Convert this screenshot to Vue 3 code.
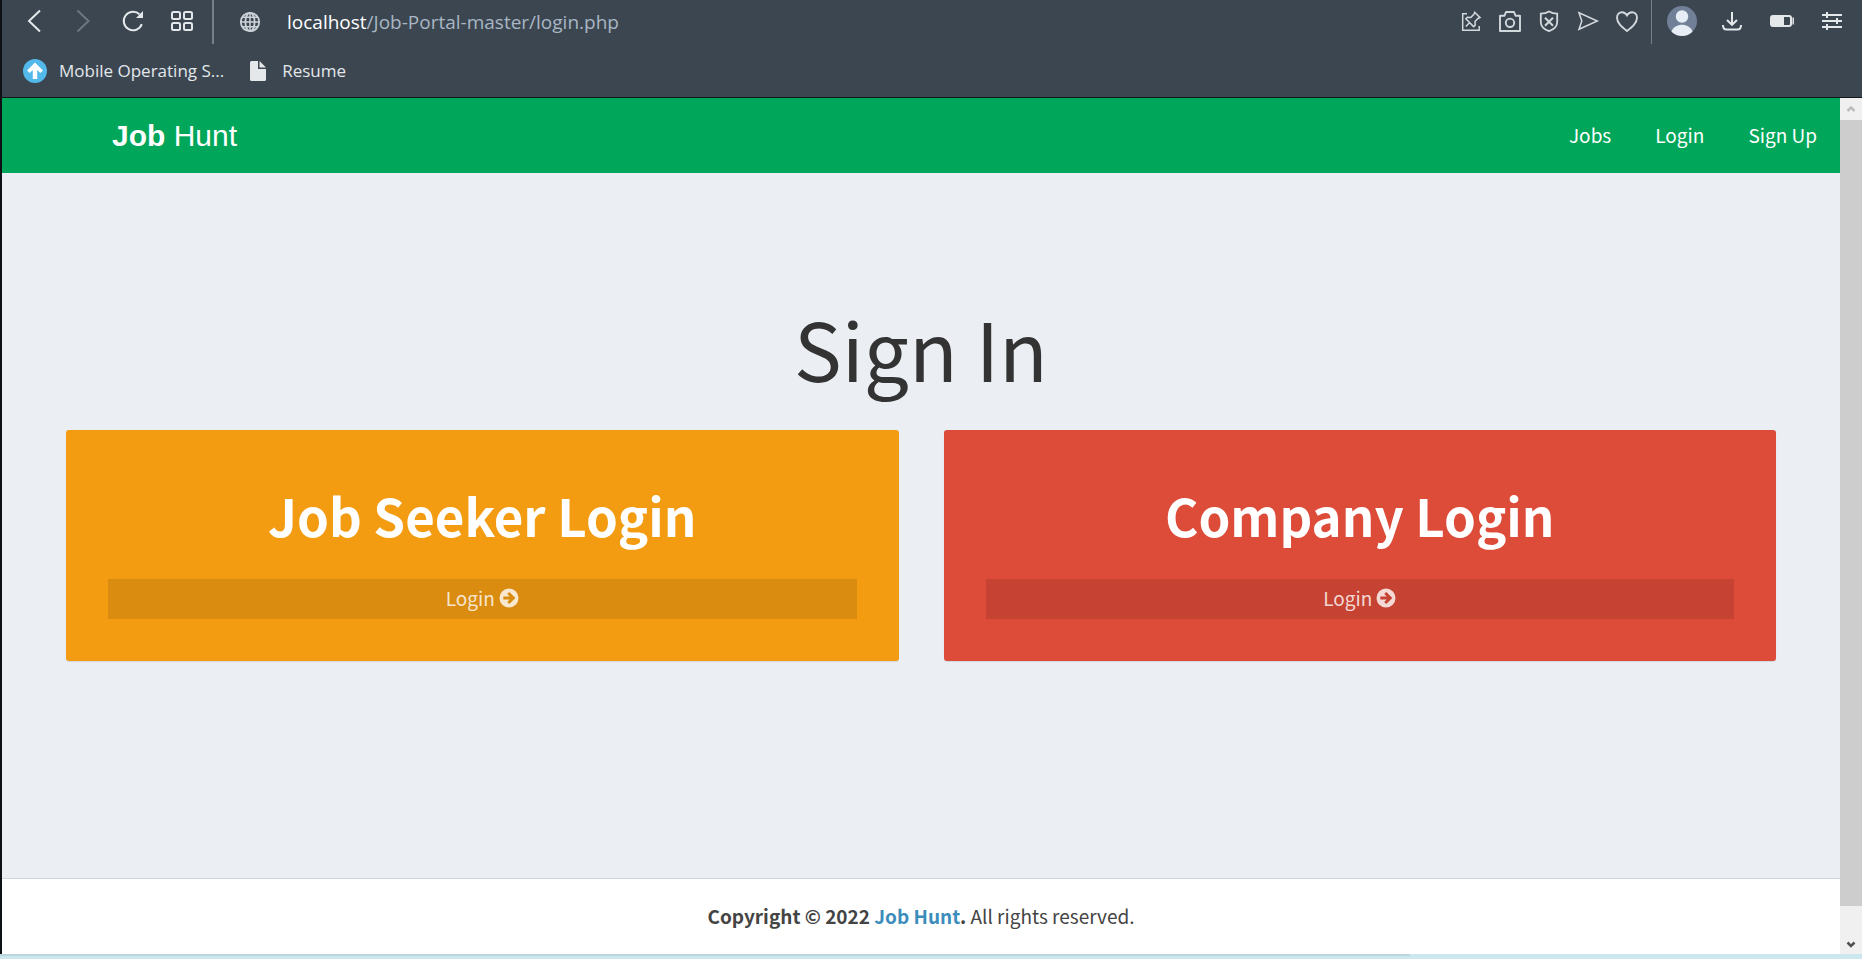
<script setup>
import { ref } from 'vue'

const path = ref('/Job-Portal-master/login.php')

const navLinks = ['Jobs', 'Login', 'Sign Up']

const cards = [
  { title: 'Job Seeker Login', tone: 'amber' },
  { title: 'Company Login', tone: 'red' },
]
</script>

<template>
  <div class="screen">
    <div class="window">
      <header class="chrome">
        <div class="toolbar">
          <div class="group wide">
            <button type="button" aria-label="Back">
              <svg width="24" height="24" viewBox="0 0 24 24"><path d="M17 1.500 6 12l11 10.500" stroke-width="2" /></svg>
            </button>
            <button type="button" aria-label="Forward" class="dim">
              <svg width="24" height="24" viewBox="0 0 24 24"><path d="M5.500 1.500 16.500 12l-11 10.500" stroke-width="2" /></svg>
            </button>
            <button type="button" aria-label="Reload">
              <svg width="24" height="24" viewBox="0 0 24 24">
                <path d="M20.800 15.200A9.300 9.300 0 1 1 18.600 5.400" stroke-width="2" />
                <path d="M22 2v7h-7z" class="solid" />
              </svg>
            </button>
            <button type="button" aria-label="Speed dial">
              <svg width="24" height="24" viewBox="0 0 24 24" stroke-width="2">
                <rect x="2" y="3" width="8" height="7" rx="1.500" /><rect x="14" y="3" width="8" height="7" rx="1.500" />
                <rect x="2" y="14" width="8" height="7" rx="1.500" /><rect x="14" y="14" width="8" height="7" rx="1.500" />
              </svg>
            </button>
          </div>
          <span class="divider thick"></span>
          <button type="button" class="site" aria-label="Site information">
            <svg width="24" height="24" viewBox="0 0 24 24" stroke-width="1.800">
              <circle cx="12" cy="12" r="9.200" /><ellipse cx="12" cy="12" rx="4.600" ry="9.200" />
              <path d="M12 3v18M3 12h18M4.500 7.300h15M4.500 16.700h15" stroke-width="1.500" />
            </svg>
          </button>
          <div class="address">
            <label for="address">localhost</label>
            <input id="address" v-model="path" type="text" spellcheck="false" />
          </div>
          <div class="group narrow">
            <button type="button" aria-label="Open in panel">
              <svg width="24" height="24" viewBox="0 0 24 24" stroke-width="1.500">
                <path d="M8 4.800H3.700v16.500h16.500V17" />
                <path d="m15.700 3.300 5.300 5.300-2 .9-3 3 .2 3.600-1.600 1.500-7.800-7.800L8.300 8.200l3.600.2 3-3zM10.500 13.800 6.800 17.500" />
              </svg>
            </button>
            <button type="button" aria-label="Snapshot">
              <svg width="24" height="24" viewBox="0 0 24 24" stroke-width="1.900">
                <path d="M2 6.700h4.500L8 3h8l1.500 3.700H22V22H2z" stroke-linejoin="round" /><circle cx="12" cy="13.800" r="4.200" />
              </svg>
            </button>
            <button type="button" aria-label="Ad blocker">
              <svg width="24" height="24" viewBox="0 0 24 24" stroke-width="1.800">
                <path d="M12 2.500c2.500 1.600 5.300 2.200 8.200 2.200V13c0 4.500-3.700 7.600-8.200 9.200C7.500 20.600 3.800 17.500 3.800 13V4.700c2.900 0 5.700-.6 8.200-2.200z" />
                <path d="m8 8.800 8 8m0-8-8 8" stroke-width="2" />
              </svg>
            </button>
            <button type="button" aria-label="Send">
              <svg width="24" height="24" viewBox="0 0 24 24" stroke-width="1.500">
                <path d="M3 3.800 21.300 12 3 20.300 5.800 12z" />
              </svg>
            </button>
            <button type="button" aria-label="Add to favourites">
              <svg width="24" height="24" viewBox="0 0 24 24" stroke-width="1.900">
                <path d="M12 22C7 18 2 14 2 8.800 2 5.200 4.300 3.200 7 3.200c2.200 0 4 1.400 5 3.200 1-1.800 2.800-3.200 5-3.200 2.700 0 5 2 5 5.600C22 14 17 18 12 22z" />
              </svg>
            </button>
          </div>
          <span class="divider"></span>
          <div class="group roomy">
            <button type="button" aria-label="Profile">
              <svg width="30" height="30" viewBox="0 0 30 30">
                <circle cx="15" cy="15" r="15" class="plate" />
                <circle cx="15" cy="10.500" r="6.200" class="person" />
                <path d="M4.500 25.700C6 21 10.500 18.800 15 18.800S24 21 25.500 25.700A15 15 0 0 1 4.500 25.700z" class="person" />
              </svg>
            </button>
            <button type="button" aria-label="Downloads">
              <svg width="24" height="24" viewBox="0 0 24 24" stroke-width="2">
                <path d="M12 3v12.500M7 11l5 4.800L17 11M3 16c0 3 1 4.500 3.500 4.500h11c2.500 0 3.500-1.500 3.500-4.500" />
              </svg>
            </button>
            <button type="button" aria-label="Battery saver">
              <svg width="24" height="24" viewBox="0 0 24 24">
                <rect x="1" y="7" width="20" height="10" rx="2" stroke-width="2" />
                <path d="M1 7h13v10H1z" class="solid" /><path d="M23.200 8.500v7" stroke-width="1.500" />
              </svg>
            </button>
            <button type="button" aria-label="Easy setup">
              <svg width="24" height="24" viewBox="0 0 24 24" stroke-width="2">
                <path d="M2 6h20M2 12h20M2 18h20M7 3v6M17 9v6M7 15v6" />
              </svg>
            </button>
          </div>
        </div>
        <nav class="bookmarks" aria-label="Bookmarks">
          <a href="#">
            <svg width="24" height="24" viewBox="0 0 24 24">
              <circle cx="12" cy="12" r="12" class="badge" />
              <path d="M12 3.600 20 11.400l-2.600 2.700-3.200-3V20H9.800v-8.900l-3.200 3L4 11.400z" class="white" />
            </svg>
            Mobile Operating S...
          </a>
          <a href="#">
            <svg width="24" height="24" viewBox="0 0 24 24">
              <path d="M4 3.500Q4 2 5.500 2H12v8h8v10.500q0 1.500-1.500 1.500h-13Q4 22 4 20.500zM13.500 2 20 8.500h-6.500z" class="solid" />
            </svg>
            Resume
          </a>
        </nav>
      </header>

      <div class="viewport">
        <div class="page">
          <header class="site-header">
            <a href="#" class="brand"><b>Job</b> Hunt</a>
            <nav class="links" aria-label="Main">
              <a v-for="link in navLinks" :key="link" href="#">{{ link }}</a>
            </nav>
          </header>

          <main>
            <h1>Sign In</h1>
            <div class="cards">
              <section v-for="card in cards" :key="card.title" class="card" :class="card.tone">
                <h2>{{ card.title }}</h2>
                <a href="#" class="card-link">
                  Login
                  <svg width="20" height="20" viewBox="0 0 20 20" aria-hidden="true">
                    <path
                      fill-rule="evenodd"
                      d="M10 .5a9.500 9.500 0 1 0 0 19a9.500 9.500 0 0 0 0-19zM10.300 3.900 16.400 10l-6.100 6.100-2.100-2.100 2.500-2.500H4.300v-3h6.400L8.200 6z"
                      class="solid"
                    />
                  </svg>
                </a>
              </section>
            </div>
          </main>

          <footer>
            <strong>Copyright © 2022 <a href="#">Job Hunt</a>.</strong> All rights reserved.
          </footer>
        </div>

        <div class="scrollbar">
          <button type="button" aria-label="Scroll up" class="up">
            <svg width="10" height="10" viewBox="0 0 10 10"><path d="M1.500 7 5 3.500 8.500 7" stroke-width="2.500" /></svg>
          </button>
          <div class="track"><div class="thumb"></div></div>
          <button type="button" aria-label="Scroll down" class="down">
            <svg width="10" height="10" viewBox="0 0 10 10"><path d="M1.500 4.500 5 8l3.500-3.500" stroke-width="2.500" /></svg>
          </button>
        </div>
      </div>
    </div>
    <div class="desktop-edge"><div class="shade"></div></div>
  </div>
</template>

<style>
body {
  margin: 0;
}
</style>

<style scoped>
.screen,
.screen * {
  box-sizing: border-box;
}

.screen {
  display: flex;
  flex-direction: column;
  min-height: 100vh;
  font-family: 'Noto Sans CJK JP', 'Noto Sans', sans-serif;
  font-size: 19px;
  line-height: 30px;
}

.window {
  flex: 1;
  display: flex;
  flex-direction: column;
  border-left: 2px solid #0d1116;
}

a {
  color: inherit;
  text-decoration: none;
}

button {
  display: flex;
  align-items: center;
  justify-content: center;
  padding: 0;
  border: 0;
  background: none;
  color: inherit;
}

svg {
  display: block;
  flex: none;
  fill: none;
  stroke: currentColor;
}

.solid {
  fill: currentColor;
  stroke: none;
}

/* Browser chrome */
.chrome {
  background: #3b4651;
  border-bottom: 1px solid #14181c;
  color: #e4e8eb;
  font-family: 'Open Sans', 'Noto Sans', sans-serif;
}

.toolbar {
  display: flex;
  height: 44px;
  padding: 0 5px 0 8px;
}

.group {
  display: flex;
  height: 42px;
}

.wide button {
  width: 49px;
}

.roomy button {
  width: 50px;
}

.narrow button {
  width: 39px;
}

.narrow {
  color: #d3d8dc;
}

.dim {
  color: #6d7781;
}

.divider {
  width: 1px;
  margin: 0 5px;
  background: #76808a;
}

.divider.thick {
  width: 2px;
  margin: 0 12px 0 6px;
}

.site {
  width: 48px;
  height: 44px;
  color: #cdd3d8;
}

.address {
  flex: 1;
  display: flex;
  align-items: center;
  height: 44px;
  padding-left: 13px;
  font-size: 19px;
}

.address label {
  color: #fff;
}

.address input {
  flex: 1;
  min-width: 0;
  padding: 0;
  border: 0;
  outline: 0;
  background: none;
  color: #a9b6c3;
  font: inherit;
}

.bookmarks {
  display: flex;
  align-items: center;
  gap: 22px;
  height: 53px;
  padding-left: 21px;
  font-size: 17px;
}

.bookmarks a {
  display: flex;
  align-items: center;
  gap: 12px;
}

.badge {
  fill: #53b9ea;
  stroke: none;
}

.white {
  fill: #fff;
  stroke: none;
}

.plate {
  fill: #718096;
  stroke: none;
}

.person {
  fill: #e6edf5;
  stroke: none;
}

/* Page */
.viewport {
  flex: 1;
  display: flex;
}

.page {
  flex: 1;
  display: flex;
  flex-direction: column;
  background: #ebeff4;
  color: #444;
}

.site-header {
  display: flex;
  align-items: center;
  justify-content: space-between;
  height: 75px;
  padding-left: 110px;
  background: #00a65a;
  color: #fff;
}

.brand {
  font-family: 'Liberation Sans', Arial, sans-serif;
  font-size: 30px;
}

.links {
  display: flex;
  gap: 44px;
  padding: 0 23px 2px;
}

main {
  flex: 1;
  padding: 130px 64px 0;
}

h1 {
  margin: 0 0 39px;
  color: #333;
  font-size: 80px;
  font-weight: 400;
  line-height: 88px;
  text-align: center;
}

.cards {
  display: grid;
  grid-template-columns: 1fr 1fr;
  gap: 45px;
}

.card {
  padding: 56px 42px 42px;
  border-radius: 3px;
  box-shadow: 0 1px 1px rgba(0, 0, 0, 0.1);
  color: #fff;
  text-align: center;
}

.amber {
  background: #f39c12;
}

.red {
  background: #dd4b39;
}

h2 {
  margin: 0 0 35px;
  font-size: 51px;
  font-weight: 700;
  line-height: 58px;
}

.card-link {
  display: flex;
  align-items: center;
  justify-content: center;
  gap: 4px;
  height: 40px;
  padding-bottom: 2px;
  background: rgba(0, 0, 0, 0.1);
  color: rgba(255, 255, 255, 0.8);
}

footer {
  height: 76px;
  padding: 22px;
  border-top: 1px solid #d2d6de;
  background: #fff;
  text-align: center;
}

footer a {
  color: #3c8dbc;
}

/* Scrollbar */
.scrollbar {
  display: flex;
  flex-direction: column;
  width: 22px;
  background: #f0f0f0;
}

.scrollbar button {
  height: 22px;
}

.up {
  color: #bcbcbc;
}

.down {
  color: #505050;
}

.track {
  flex: 1;
}

.thumb {
  height: 96.8%;
  background: #cdcdcd;
}

.desktop-edge {
  height: 5px;
  background: #cbe8ee;
}

.shade {
  width: 75.7%;
  height: 2px;
  background: #bbd6dc;
}
</style>
